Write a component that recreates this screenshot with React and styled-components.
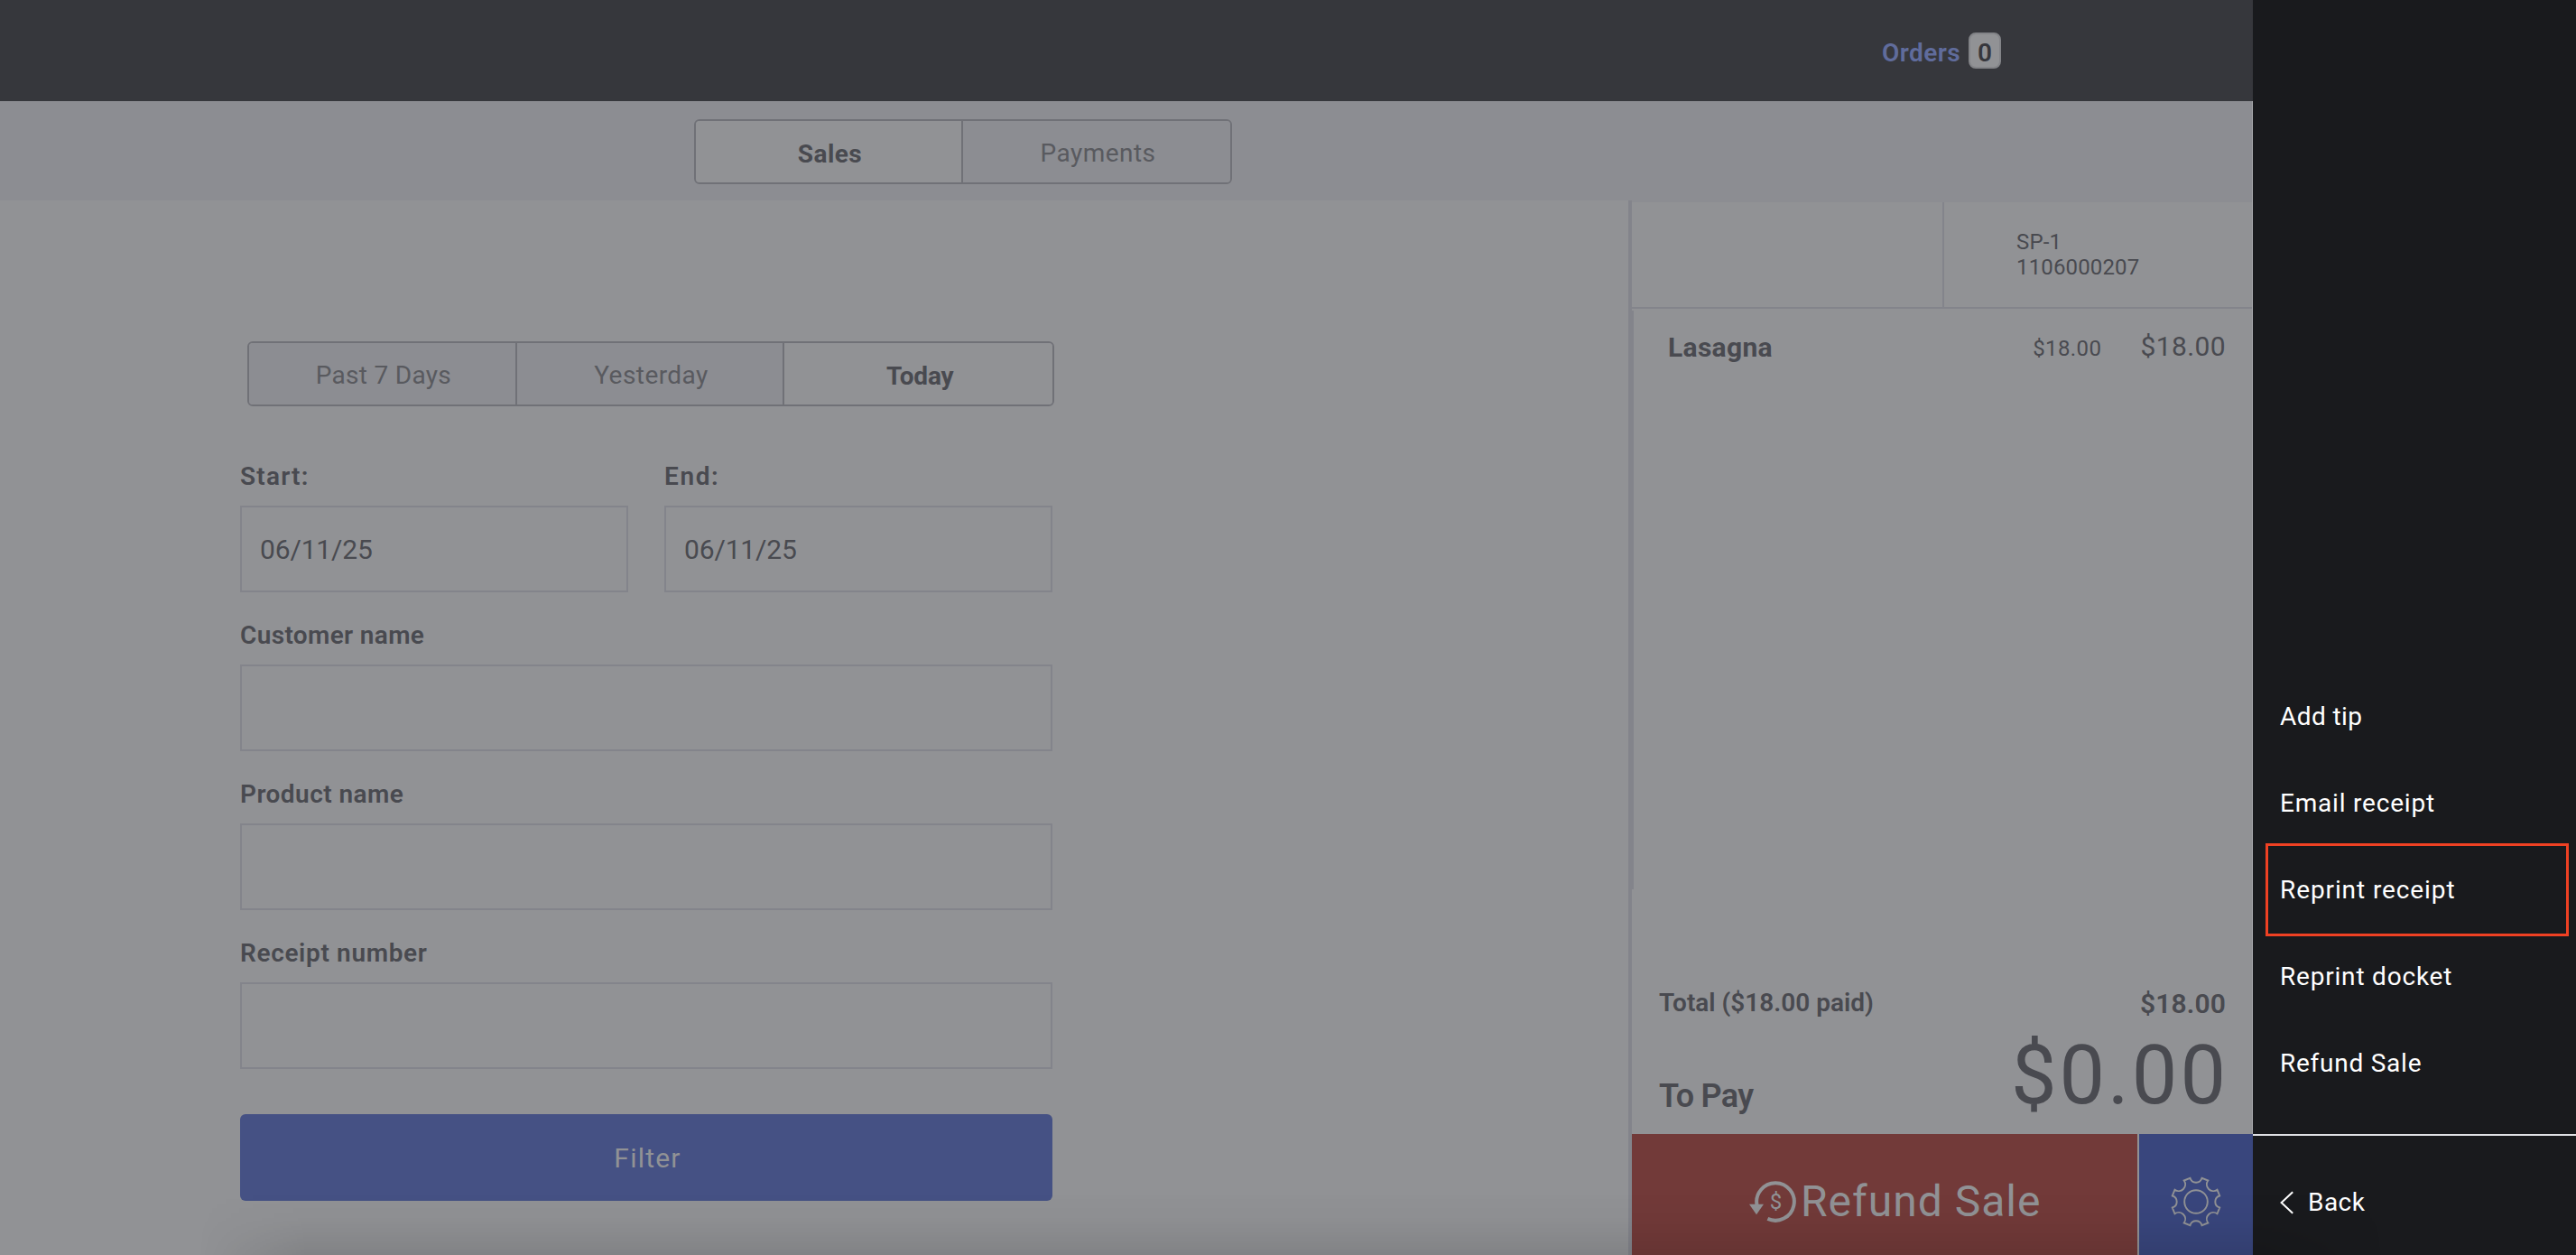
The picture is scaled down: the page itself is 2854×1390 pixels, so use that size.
import styled, { createGlobalStyle } from 'styled-components'

const GlobalStyle = createGlobalStyle`
    * {
        box-sizing: border-box;
    }
    body {
        margin: 0;
        background: #919295;
        color: #494a50;
        font-family: "Roboto", sans-serif;
        font-size: 28px;
        line-height: 33px;
    }
`
const Screen = styled.div`
    position: relative;
    display: flex;
    width: 2854px;
    height: 1390px;
    overflow: hidden;
`
const Main = styled.div`
    display: flex;
    flex-direction: column;
    width: 2496px;
`
const Header = styled.header`
    display: flex;
    align-items: flex-start;
    height: 112px;
    padding: 36px 0 0 2085px;
    background: #36373c;
`
const OrdersLink = styled.span`
    width: 96px;
    margin-top: 6px;
    color: #606c9c;
    font-weight: 600;
    letter-spacing: 0.45px;
`
const Count = styled.span`
    width: 36px;
    height: 40px;
    padding-top: 4px;
    border: 2px solid #838488;
    border-radius: 8px;
    background: #919295;
    color: #36373c;
    font-weight: 600;
    text-align: center;
`
const TabBar = styled.nav`
    height: 110px;
    padding: 20px 0 0 769px;
    background: #8c8d92;
`
const Segments = styled.div`
    display: grid;
    grid-auto-flow: column;
    grid-auto-columns: 1fr;
    width: ${(p) => p.$width}px;
    height: 72px;
    margin-left: ${(p) => p.$indent || 0}px;
    border: 2px solid #707177;
    border-radius: 6px;
    overflow: hidden;
`
const Segment = styled.button`
    padding: ${(p) => (p.$active ? 5 : 3)}px 0 0 3px;
    border: 0;
    border-right: 2px solid #707177;
    background: ${(p) => (p.$active ? '#919295' : '#8c8d92')};
    color: ${(p) => (p.$active ? '#494a50' : '#595a5f')};
    font: ${(p) => (p.$active ? 700 : 400)} 28px/33px "Roboto", sans-serif;
    letter-spacing: ${(p) => p.$track}px;
    &:last-child {
        border-right: 0;
    }
`
const Content = styled.div`
    display: flex;
    flex: 1;
`
const Filters = styled.div`
    width: 1804px;
    padding: 156px 0 0 266px;
`
const Form = styled.div`
    display: grid;
    grid-template-columns: 430px 430px;
    column-gap: 40px;
    row-gap: 31px;
    margin-top: 61px;
`
const Field = styled.label`
    display: flex;
    flex-direction: column;
    gap: 16px;
    grid-column: ${(p) => (p.$wide ? 'span 2' : 'auto')};
    font-weight: 600;
    letter-spacing: ${(p) => p.$track}px;
`
const Value = styled.div`
    display: flex;
    align-items: center;
    height: 96px;
    padding-left: 20px;
    border: 2px solid #83848b;
    font-size: 30px;
    font-weight: 400;
    letter-spacing: -0.15px;
`
const FilterButton = styled.button`
    width: 900px;
    height: 96px;
    margin-top: 50px;
    padding: 0 0 0 3px;
    border: 0;
    border-radius: 6px;
    background: #455184;
    color: #919295;
    font: 400 30px/35px "Roboto", sans-serif;
    letter-spacing: 1.2px;
`
const Receipt = styled.aside`
    display: flex;
    flex-direction: column;
    width: 692px;
    border-left: 4px solid #83848b;
`
const ReceiptHead = styled.div`
    display: flex;
    height: 120px;
    border-top: 2px solid #8c8d92;
    border-bottom: 2px solid #83848b;
`
const Customer = styled.div`
    width: 346px;
    border-right: 2px solid #83848b;
`
const SaleId = styled.div`
    display: flex;
    flex-direction: column;
    justify-content: center;
    padding-left: 80px;
    font-size: 24px;
    line-height: 28px;
    letter-spacing: 0.15px;
`
const Lines = styled.div`
    height: 641px;
    margin-top: 2px;
    border-left: 2px solid #83848b;
`
const Line = styled.div`
    display: flex;
    justify-content: space-between;
    padding: 22px 30px 0 38px;
    line-height: 35px;
`
const LineName = styled.span`
    padding-top: 1px;
    font-size: 30px;
    font-weight: 700;
    letter-spacing: 0.3px;
`
const LinePrices = styled.span`
    display: flex;
    align-items: baseline;
    gap: 43px;
`
const Price = styled.span`
    font-size: ${(p) => p.$size}px;
    font-weight: ${(p) => p.$weight || 400};
    line-height: 35px;
    letter-spacing: ${(p) => p.$track}px;
`
const Totals = styled.div`
    margin-top: auto;
    padding: 0 30px 12px;
`
const TotalRow = styled.div`
    display: flex;
    justify-content: space-between;
    height: 45px;
    font-weight: 600;
`
const PayRow = styled.div`
    display: flex;
    justify-content: space-between;
    align-items: flex-end;
`
const PayLabel = styled.span`
    margin-bottom: 9px;
    font-size: 36px;
    font-weight: 600;
    line-height: 42px;
    letter-spacing: -0.7px;
`
const PayAmount = styled.span`
    margin-right: -3px;
    font-size: 90px;
    line-height: 105px;
    letter-spacing: 3px;
`
const Actions = styled.div`
    display: flex;
    gap: 2px;
    height: 134px;
`
const RefundButton = styled.button`
    display: flex;
    align-items: center;
    gap: 5px;
    width: 560px;
    padding: 15px 0 0 130px;
    border: 0;
    background: #723a39;
    color: #919295;
    font: 400 48px/57px "Roboto", sans-serif;
    letter-spacing: 1px;
`
const SettingsButton = styled.button`
    display: flex;
    align-items: center;
    justify-content: center;
    width: 126px;
    padding: 16px 0 0;
    border: 0;
    background: #39467d;
    color: #919295;
`
const Drawer = styled.div`
    display: flex;
    flex-direction: column;
    justify-content: flex-end;
    width: 358px;
    background: #191a1d;
    color: #fff;
`
const Menu = styled.ul`
    margin: 0;
    padding: 0 0 31px;
    list-style: none;
`
const MenuItem = styled.li`
    position: relative;
    height: 96px;
    padding: 32px 0 0 30px;
    letter-spacing: ${(p) => p.$track}px;
`
const Highlight = styled.span`
    position: absolute;
    top: -3px;
    right: 8px;
    left: 14px;
    height: 103px;
    border: 3px solid #ef4123;
`
const BackButton = styled.div`
    display: flex;
    align-items: center;
    gap: 16px;
    height: 134px;
    padding: 15px 0 0 30px;
    border-top: 2px solid #dfe0e4;
    letter-spacing: 0.45px;
`
const Edge = styled.div`
    position: absolute;
    top: 112px;
    left: 2495px;
    width: 1px;
    height: 1144px;
    background: #a9aaae;
`
const BottomShade = styled.div`
    position: absolute;
    right: 0;
    bottom: 0;
    left: 0;
    height: 70px;
    background: linear-gradient(to bottom, transparent, rgba(0, 0, 0, 0.025) 45%, rgba(0, 0, 0, 0.1));
    mask-image: linear-gradient(to right, transparent 220px, #000 340px, #000 2500px, transparent 2640px);
`

const RefundIcon = () => (
    <svg width="52" height="46" viewBox="0 0 52 46" fill="none">
        <path d="M8.6 27A20.8 20.8 0 1 1 20.4 41.9" stroke="currentColor" strokeWidth="4" />
        <path d="M0 25.7H16L8 37.3Z" fill="currentColor" />
        <text x="29.4" y="31.4" fill="currentColor" fontSize="24" letterSpacing="0" textAnchor="middle">$</text>
    </svg>
)

// eight scooped notches, the ones on the diagonals are a bit wider
const point = (deg, r = 27) => {
    const a = (deg * Math.PI) / 180
    return `${(28 + r * Math.sin(a)).toFixed(2)} ${(28 - r * Math.cos(a)).toFixed(2)}`
}
const gear = [0, 45, 90, 135, 180, 225, 270, 315]
    .map((deg, i) => {
        const half = i % 2 ? 15.5 : 14
        const r = i % 2 ? 7.3 : 6.8
        return `${i ? 'L' : 'M'}${point(deg - half)}A${r} ${r} 0 0 0 ${point(deg + half)}`
    })
    .join('') + 'Z'

const GearIcon = () => (
    <svg width="56" height="56" viewBox="0 0 56 56" fill="none" stroke="currentColor" strokeWidth="1.9">
        <path d={gear} />
        <circle cx="28" cy="28" r="12.8" />
    </svg>
)

const BackIcon = () => (
    <svg width="15" height="26" viewBox="0 0 15 26" fill="none" stroke="currentColor" strokeWidth="2">
        <path d="M14.2 1.2L1.6 13L14.2 24.8" />
    </svg>
)

const menu = [
    { label: 'Add tip', track: 0.42 },
    { label: 'Email receipt', track: 0.8 },
    { label: 'Reprint receipt', track: 0.9, selected: true },
    { label: 'Reprint docket', track: 0.8 },
    { label: 'Refund Sale', track: 0.75 },
]

export default function App() {
    return (
        <Screen>
            <GlobalStyle />
            <Main>
                <Header>
                    <OrdersLink>Orders</OrdersLink>
                    <Count>0</Count>
                </Header>
                <TabBar>
                    <Segments $width={596}>
                        <Segment $active $track={0.45}>Sales</Segment>
                        <Segment $track={0.45}>Payments</Segment>
                    </Segments>
                </TabBar>
                <Content>
                    <Filters>
                        <Segments $width={894} $indent={8}>
                            <Segment $track={0.3}>Past 7 Days</Segment>
                            <Segment $track={0.45}>Yesterday</Segment>
                            <Segment $active $track={-0.2}>Today</Segment>
                        </Segments>
                        <Form>
                            <Field $track={1.2}>
                                Start:
                                <Value>06/11/25</Value>
                            </Field>
                            <Field $track={1.6}>
                                End:
                                <Value>06/11/25</Value>
                            </Field>
                            <Field $wide $track={0.35}>
                                Customer name
                                <Value />
                            </Field>
                            <Field $wide $track={0.45}>
                                Product name
                                <Value />
                            </Field>
                            <Field $wide $track={0.65}>
                                Receipt number
                                <Value />
                            </Field>
                        </Form>
                        <FilterButton>Filter</FilterButton>
                    </Filters>
                    <Receipt>
                        <ReceiptHead>
                            <Customer />
                            <SaleId>
                                <span>SP-1</span>
                                <span>1106000207</span>
                            </SaleId>
                        </ReceiptHead>
                        <Lines>
                            <Line>
                                <LineName>Lasagna</LineName>
                                <LinePrices>
                                    <Price $size={24} $track={0.4}>$18.00</Price>
                                    <Price $size={30} $track={0.4}>$18.00</Price>
                                </LinePrices>
                            </Line>
                        </Lines>
                        <Totals>
                            <TotalRow>
                                <span>Total ($18.00 paid)</span>
                                <Price $size={30} $weight={600} $track={0.15}>$18.00</Price>
                            </TotalRow>
                            <PayRow>
                                <PayLabel>To Pay</PayLabel>
                                <PayAmount>$0.00</PayAmount>
                            </PayRow>
                        </Totals>
                        <Actions>
                            <RefundButton>
                                <RefundIcon />
                                Refund Sale
                            </RefundButton>
                            <SettingsButton>
                                <GearIcon />
                            </SettingsButton>
                        </Actions>
                    </Receipt>
                </Content>
            </Main>
            <Drawer>
                <Menu>
                    {menu.map((item) => (
                        <MenuItem key={item.label} $track={item.track}>
                            {item.label}
                            {item.selected && <Highlight />}
                        </MenuItem>
                    ))}
                </Menu>
                <BackButton>
                    <BackIcon />
                    Back
                </BackButton>
            </Drawer>
            <Edge />
            <BottomShade />
        </Screen>
    )
}
